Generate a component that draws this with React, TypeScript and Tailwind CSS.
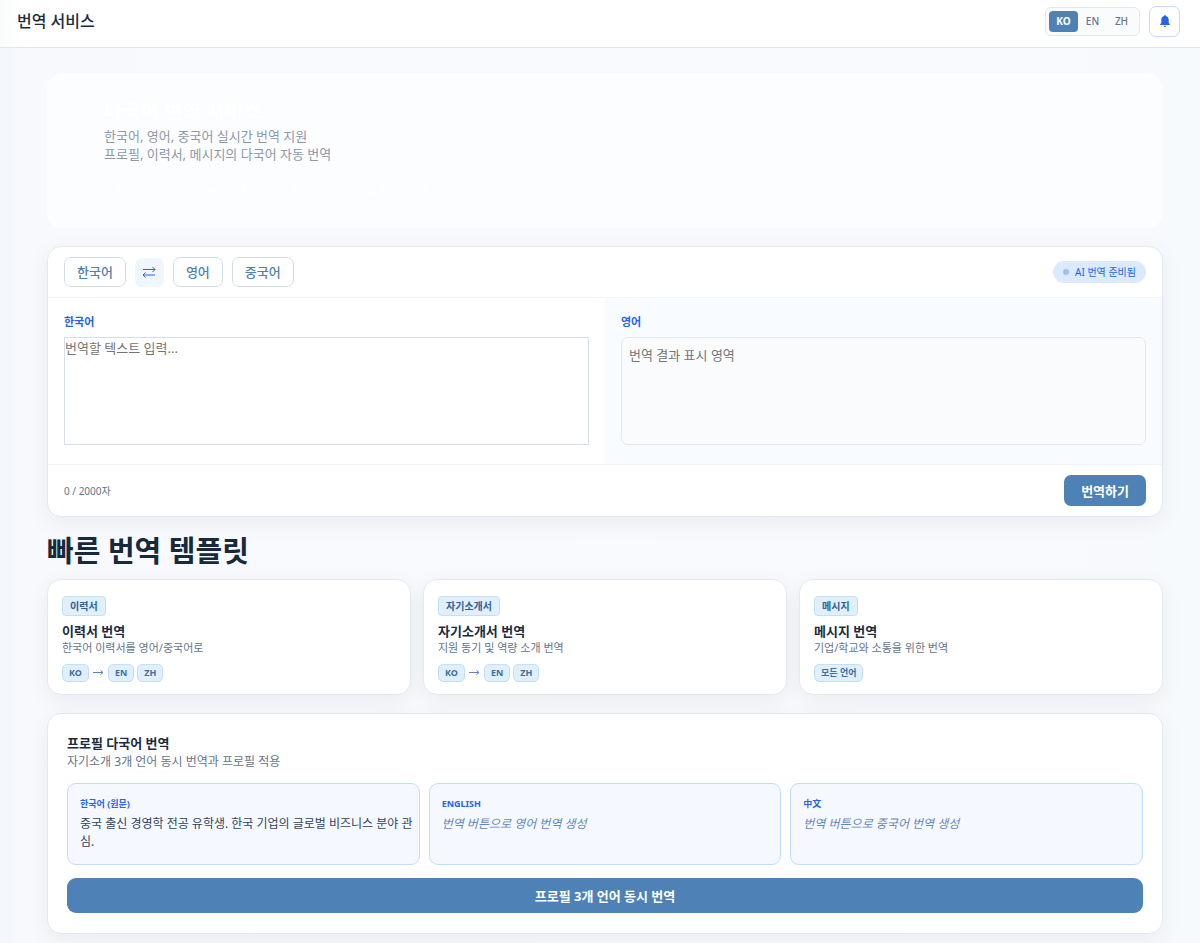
import { useState } from "react";
import clsx from "clsx";

const LANGUAGES = ["KO", "EN", "ZH"];

const TEMPLATES = [
    { badge: "이력서", title: "이력서 번역", description: "한국어 이력서를 영어/중국어로", from: "KO", to: ["EN", "ZH"] },
    { badge: "자기소개서", title: "자기소개서 번역", description: "지원 동기 및 역량 소개 번역", from: "KO", to: ["EN", "ZH"] },
    { badge: "메시지", title: "메시지 번역", description: "기업/학교와 소통을 위한 번역", from: undefined, to: ["모든 언어"] },
];

const PROFILES = [
    { label: "한국어 (원문)", text: "중국 출신 경영학 전공 유학생. 한국 기업의 글로벌 비즈니스 분야 관심.", pending: false },
    { label: "ENGLISH", text: "번역 버튼으로 영어 번역 생성", pending: true },
    { label: "中文", text: "번역 버튼으로 중국어 번역 생성", pending: true },
];

const HERO_TAGS = ["한국어 (KO)", "English (EN)", "中文 (ZH)", "AI 실시간 번역"];

const BellIcon = () => (
    <svg width="12" height="12" viewBox="0 0 12 12" fill="currentColor" aria-hidden="true">
        <path d="M6 0a.8.8 0 0 0-.8.8v.3C3.400 1.500 2.300 2.900 2.300 4.800v2.400c0 .8-.4 1.400-1.100 2v.9h9.600v-.9c-.7-.6-1.100-1.200-1.100-2V4.800c0-1.900-1.100-3.300-2.900-3.700V.8A.8.8 0 0 0 6 0zM4.900 10.700a1.100 1.300 0 0 0 2.200 0z" />
    </svg>
);

const SwapIcon = () => (
    <svg width="14" height="12" viewBox="0 0 14 12" fill="none" stroke="currentColor" aria-hidden="true">
        <path d="M1 3.500h12M10.500 1 13 3.500 10.500 6M13 9H1M3.500 6.500 1 9 3.500 11.500" />
    </svg>
);

const ArrowIcon = () => (
    <svg width="11" height="6" viewBox="0 0 11 6" fill="none" stroke="currentColor" aria-hidden="true">
        <path d="M0 2.500h10M7.500.5l2.500 2-2.500 2" />
    </svg>
);

const Header = () => {
    const [language, setLanguage] = useState("KO");

    return (
        <header className="flex h-12 items-center justify-between border-b border-[#dbe9f6] bg-white bg-linear-to-r from-[#f9fcfc] to-white to-[24px] pr-5 pl-[17px] pb-[5px]">
            <h1 className="text-[16px] leading-5 font-medium text-[#1b2c3e]">번역 서비스</h1>
            <div className="flex items-center gap-[9px]">
                <div className="flex rounded-md border border-[#e2e8f0] bg-[#fafbfd] p-[3px]">
                    {LANGUAGES.map((l) => (
                        <button
                            key={l}
                            type="button"
                            onClick={() => setLanguage(l)}
                            className={clsx(
                                "h-[21px] w-[29px] rounded text-[10px] leading-4",
                                l === language ? "bg-[#4e82b7] font-bold text-white" : "font-medium text-[#64748b]"
                            )}
                        >
                            {l}
                        </button>
                    ))}
                </div>
                <button
                    type="button"
                    aria-label="알림"
                    className="flex size-[31px] items-center justify-center rounded-[7px] border border-[#bfdbfe] bg-white text-[#2563eb]"
                >
                    <BellIcon />
                </button>
            </div>
        </header>
    );
};

const Hero = () => (
    <section className="rounded-2xl bg-[#fcfdfe] px-[57px] pt-[25px] pb-[26px]">
        <h2 className="text-[20px] leading-7 font-bold text-white">다국어 번역 서비스</h2>
        <p className="mt-px text-[13px] leading-[18px] text-[#8c98a8]">
            한국어, 영어, 중국어 실시간 번역 지원
            <br />
            프로필, 이력서, 메시지의 다국어 자동 번역
        </p>
        <ul className="mt-[17px] flex gap-2">
            {HERO_TAGS.map((tag) => (
                <li key={tag} className="rounded-full px-3 text-[10px] leading-[22px] font-bold text-white">
                    {tag}
                </li>
            ))}
        </ul>
    </section>
);

const LanguageButton = ({ label }: { label: string }) => (
    <button
        type="button"
        className="h-[30px] rounded-[7px] border border-[#d0dde9] bg-white px-3 text-[13px] leading-4 font-medium text-[#4e82b7]"
    >
        {label}
    </button>
);

const Translator = () => {
    const [text, setText] = useState("");

    return (
        <section className="mt-[18px] overflow-hidden rounded-[14px] border border-[#e2e9f3] bg-white shadow-[0_6px_22px_rgba(15,23,42,0.06)]">
            <div className="flex items-center justify-between border-b border-[#f1f6fc] px-4 py-[10px]">
                <div className="flex items-center gap-[9px]">
                    <LanguageButton label="한국어" />
                    <button
                        type="button"
                        aria-label="언어 바꾸기"
                        className="flex size-[29px] items-center justify-center rounded-[7px] bg-[#eff6ff] text-[#2563eb]"
                    >
                        <SwapIcon />
                    </button>
                    <LanguageButton label="영어" />
                    <LanguageButton label="중국어" />
                </div>
                <div className="flex items-center gap-[6px] rounded-full bg-[#dbeafe] px-[10px] text-[10px] leading-[22px] text-[#2563eb]">
                    <span className="size-[6px] rounded-full bg-[#9dbcf8]" />
                    AI 번역 준비됨
                </div>
            </div>
            <div className="grid grid-cols-2">
                <div className="px-4 pt-4 pb-[19px]">
                    <label htmlFor="source" className="block text-[11px] leading-4 font-bold text-[#2563eb]">한국어</label>
                    <textarea
                        id="source"
                        value={text}
                        maxLength={2000}
                        onChange={(e) => setText(e.target.value)}
                        placeholder="번역할 텍스트 입력..."
                        className="mt-[7px] block h-[108px] w-full resize-none border border-[#d5dfea] bg-white text-[13px] leading-5 placeholder:text-[#757575]"
                    />
                </div>
                <div className="bg-[#f8fbff] px-4 pt-4 pb-[19px]">
                    <label htmlFor="result" className="block text-[11px] leading-4 font-bold text-[#2563eb]">영어</label>
                    <textarea
                        id="result"
                        readOnly
                        placeholder="번역 결과 표시 영역"
                        className="mt-[7px] block h-[108px] w-full resize-none rounded-[7px] border border-[#e2e8f0] bg-[#fafbfd] p-[7px] text-[13px] leading-5 placeholder:text-[#757575]"
                    />
                </div>
            </div>
            <div className="flex items-center justify-between border-t border-[#f1f5f9] px-4 py-[10px]">
                <span className="text-[10px] leading-4 text-[#64748b]">{text.length} / 2000자</span>
                <button type="button" className="h-[31px] rounded-[7px] bg-[#4e82b7] px-[17px] text-[13px] leading-4 font-bold text-white">
                    번역하기
                </button>
            </div>
        </section>
    );
};

const LanguageTag = ({ label }: { label: string }) => (
    <span className="rounded-[5px] border border-[#c3dff3] bg-[#dfeffb] px-[6px] text-[9px] leading-4 font-bold text-[#3d709f]">
        {label}
    </span>
);

const Templates = () => (
    <section className="mt-4">
        <h2 className="text-[29px] leading-9 font-bold text-[#162a3c]">빠른 번역 템플릿</h2>
        <div className="mt-[10px] grid grid-cols-3 gap-3">
            {TEMPLATES.map((t) => (
                <article
                    key={t.title}
                    className="flex flex-col items-start rounded-[14px] border border-[#e2e9f3] bg-white px-[14px] pt-4 pb-3 shadow-[0_6px_22px_rgba(15,23,42,0.06)]"
                >
                    <span className="rounded border border-[#c3dff3] bg-[#dfeffb] px-[7px] text-[10px] leading-[18px] font-bold text-[#2f6294]">
                        {t.badge}
                    </span>
                    <h3 className="mt-[6px] text-[13px] leading-[18px] font-bold text-[#1b2c3e]">{t.title}</h3>
                    <p className="text-[11px] leading-4 text-[#64748b]">{t.description}</p>
                    <div className="mt-2 flex items-center gap-[3px]">
                        {t.from && (
                            <>
                                <LanguageTag label={t.from} />
                                <span className="mx-px text-[#5b84c4]"><ArrowIcon /></span>
                            </>
                        )}
                        {t.to.map((l) => <LanguageTag key={l} label={l} />)}
                    </div>
                </article>
            ))}
        </div>
    </section>
);

const Profile = () => (
    <section className="mt-[18px] rounded-[14px] border border-[#e2e9f3] bg-white px-[19px] py-5 shadow-[0_6px_22px_rgba(15,23,42,0.06)]">
        <h2 className="text-[13px] leading-[18px] font-bold text-[#1b2c3e]">프로필 다국어 번역</h2>
        <p className="text-[12px] leading-5 text-[#64748b]">자기소개 3개 언어 동시 번역과 프로필 적용</p>
        <div className="mt-[11px] grid grid-cols-3 gap-[9px]">
            {PROFILES.map((p) => (
                <div key={p.label} className="rounded-[9px] border border-[#bfdbfe] bg-[#f5f9ff] pt-3 pr-1 pb-[13px] pl-3">
                    <h3 className="text-[9px] leading-4 font-bold text-[#2563eb]">{p.label}</h3>
                    <p className={clsx("mt-[3px] text-[12px] leading-[18px]", p.pending ? "text-[#6486c0] italic" : "text-[#2d4260]")}>
                        {p.text}
                    </p>
                </div>
            ))}
        </div>
        <button type="button" className="mt-[13px] h-[35px] w-full rounded-[9px] bg-[#4e82b7] text-[13px] leading-4 font-bold text-white">
            프로필 3개 언어 동시 번역
        </button>
    </section>
);

export default function App() {
    return (
        <div className="min-h-screen bg-[#f8fafd] bg-linear-to-r from-[#f1f7fb] via-[#f8f9fd] via-[28px] to-[#f7fafd] font-['Noto_Sans','Noto_Sans_CJK_KR',sans-serif]">
            <Header />
            <main className="pr-[37px] pl-[47px] pt-[25px] pb-[10px]">
                <Hero />
                <Translator />
                <Templates />
                <Profile />
            </main>
        </div>
    );
}
